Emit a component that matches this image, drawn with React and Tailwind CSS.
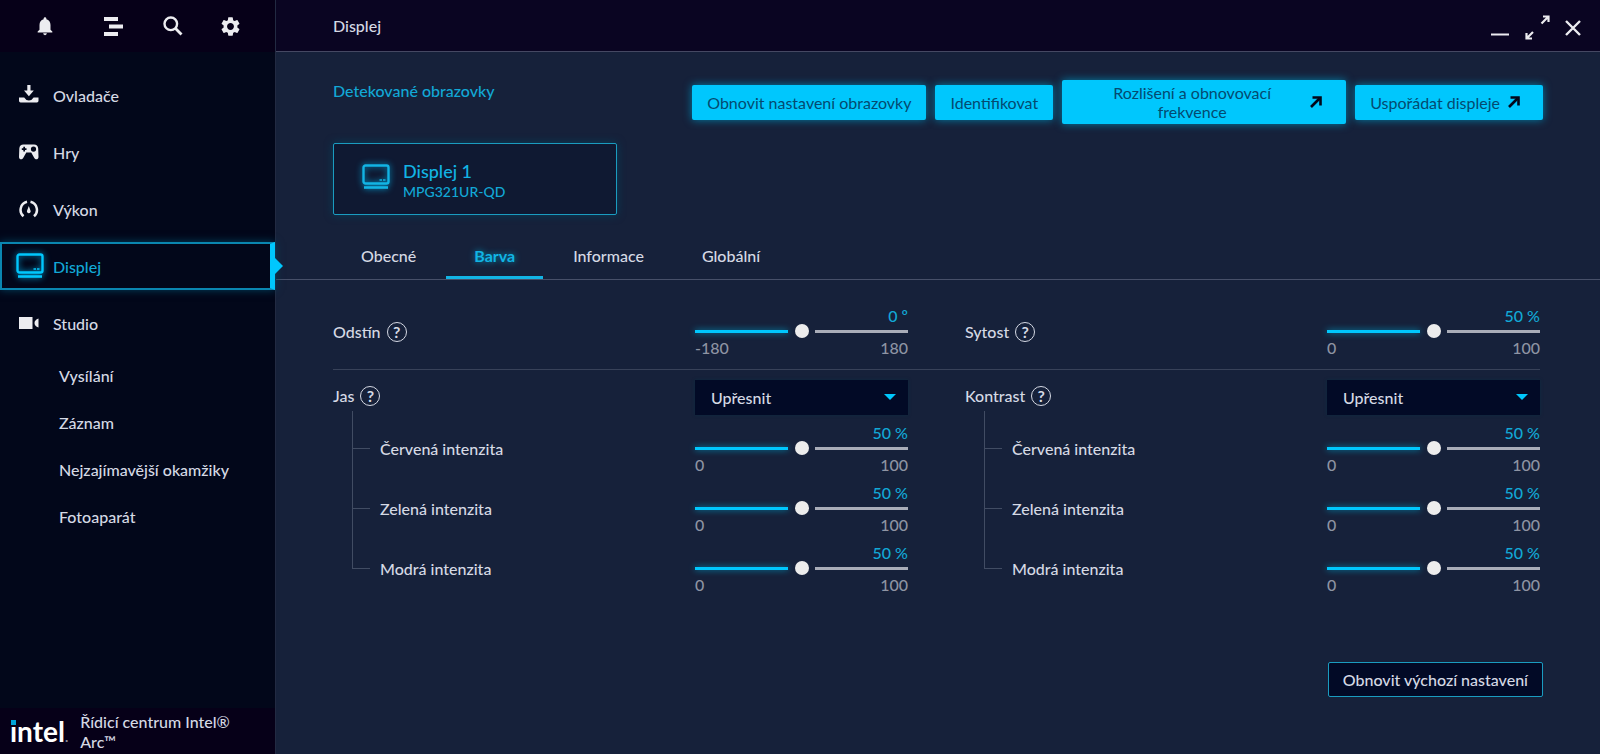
import { useState } from 'react'
import clsx from 'clsx'
import { MdNotifications, MdSettings } from 'react-icons/md'

const DriversIcon = () => (
    <svg width="20" height="19" viewBox="0 0 20 19" fill="currentColor" aria-hidden="true">
        <path d="M8.3 0h3.2v5.5h3.3L9.9 11.2 5 5.5h3.3z" />
        <path d="M0 12.6h5.2a5.3 5.3 0 0 0 9.4 0h4.9v3.2a1.6 1.6 0 0 1-1.6 1.6H1.6A1.6 1.6 0 0 1 0 15.8z" />
    </svg>
)

const GamesIcon = () => (
    <svg width="20" height="16" viewBox="0 0 20 16" fill="currentColor" aria-hidden="true">
        <path
            fillRule="evenodd"
            d="M4.500 .5h10.500c2.500 0 4 1.500 4.200 4L19.500 13c0 2.500-3 3.200-4.200 1L12.200 8.500H7.300L4.200 14C3 16.200 0 15.500 0 13L.3 4.500C.5 2 2 .5 4.500 .5zM4.300 2.800v1.500H2.800v1.700h1.500v1.500H6V6h1.500V4.300H6V2.800zM14.500 2.500a2.600 2.600 0 1 0 0 5.200 2.600 2.600 0 0 0 0-5.200z"
        />
    </svg>
)

const PerformanceIcon = () => (
    <svg width="20" height="18" viewBox="0 0 20 18" fill="none" aria-hidden="true">
        <path d="M4.500 16.200A8.300 8.300 0 0 1 8 1.800M15 16.200A8.300 8.300 0 0 0 11.500 1.800" stroke="currentColor" strokeWidth="2.500" />
        <path d="M9.800 6l1.700 4.500a1.900 1.900 0 1 1-3.400 0z" fill="currentColor" />
    </svg>
)

const StudioIcon = () => (
    <svg width="20" height="12" viewBox="0 0 20 12" fill="currentColor" aria-hidden="true">
        <path d="M0 0h13.500v12H0zM19.500 1.500v9q-4-1.500-4-4.500t4-4.500z" />
    </svg>
)

const DisplayIcon = () => (
    <svg width="28" height="26" viewBox="0 0 28 26" fill="none" className="drop-shadow-[0_0_3px_#00a3d8]" aria-hidden="true">
        <rect x="1.500" y="1.500" width="25" height="18" rx="2" stroke="currentColor" strokeWidth="2.400" />
        <path d="M17.500 16h2.500M21 16h2.500" stroke="currentColor" strokeWidth="1.600" />
        <path d="M2 23.500h24" stroke="currentColor" strokeWidth="2.600" />
    </svg>
)

const ListIcon = () => (
    <svg width="19" height="19" viewBox="0 0 19 19" fill="currentColor" aria-hidden="true">
        <path d="M0 0h14v4H0zM5 7.500h14v4H5zM0 15h14v4H0z" />
    </svg>
)

const SearchIcon = () => (
    <svg width="20" height="20" viewBox="0 0 20 20" fill="none" stroke="currentColor" aria-hidden="true">
        <circle cx="7.800" cy="7.800" r="6.300" strokeWidth="2.400" />
        <path d="M12.300 12.300l6.200 6.200" strokeWidth="2.800" />
    </svg>
)

const ArrowOutIcon = () => (
    <svg width="12" height="12" viewBox="0 0 12 12" fill="none" stroke="#02071a" aria-hidden="true">
        <path d="M1 11l8.500-8.500" strokeWidth="2.600" />
        <path d="M2.500 1.500h8v8" strokeWidth="2.600" />
    </svg>
)

const navItems = [
    { label: 'Ovladače', icon: DriversIcon },
    { label: 'Hry', icon: GamesIcon },
    { label: 'Výkon', icon: PerformanceIcon },
    { label: 'Displej', icon: DisplayIcon, active: true },
    { label: 'Studio', icon: StudioIcon },
]

const studioItems = ['Vysílání', 'Záznam', 'Nejzajímavější okamžiky', 'Fotoaparát']

const tabs = ['Obecné', 'Barva', 'Informace', 'Globální']

const channels = ['Červená intenzita', 'Zelená intenzita', 'Modrá intenzita']

const Sidebar = () => (
    <aside className="flex w-[276px] shrink-0 flex-col border-r border-[#222a42] bg-[#02071a]">
        <div className="flex h-[52px] items-center gap-10 bg-[#060018] pl-[34px] text-[#ececf0]">
            <button type="button" aria-label="Oznámení" className="mr-2"><MdNotifications size={22} /></button>
            <button type="button" aria-label="Seznam"><ListIcon /></button>
            <button type="button" aria-label="Hledat"><SearchIcon /></button>
            <button type="button" aria-label="Nastavení" className="-ml-1"><MdSettings size={23} /></button>
        </div>

        <nav className="mt-[14px]">
            <ul>
                {navItems.map(({ label, icon: Icon, active }) => (
                    <li key={label} className="flex h-[57px] items-center">
                        <a
                            href="#"
                            className={clsx(
                                'relative flex h-12 w-full items-center',
                                active
                                    ? 'gap-[9px] border-2 border-r-[5px] border-[#0a86b0] border-r-[#00c7fd] pl-[14px] text-[#12a8d6] shadow-[0_0_8px_#00425f]'
                                    : 'gap-[14px] pl-[19px]'
                            )}
                        >
                            <span className={active ? 'text-[#00c7fd]' : 'text-[#ececf0]'}><Icon /></span>
                            <span className="pt-[2px]">{label}</span>
                            {active && (
                                <span className="absolute top-[14px] -right-[13px] border-y-8 border-l-8 border-y-transparent border-l-[#00c7fd]" />
                            )}
                        </a>
                    </li>
                ))}
            </ul>
            <ul className="pt-px pl-[59px]">
                {studioItems.map((label) => (
                    <li key={label}>
                        <a href="#" className="flex h-[47px] items-center">{label}</a>
                    </li>
                ))}
            </ul>
        </nav>

        <div className="mt-auto flex h-[46px] items-center gap-3 bg-[#060018] pl-[10px]">
            <div className="relative font-[Lato] text-[28px] leading-8 font-bold text-white">
                intel<span className="text-sm text-[#8a8a9a]">.</span>
                <span className="absolute top-1 left-0 size-[7px] border border-[#060018] bg-[#00a3d8]" />
            </div>
            <p className="pt-px leading-5">Řídicí centrum Intel®<br />Arc™</p>
        </div>
    </aside>
)

const TitleBar = () => (
    <header className="flex h-[52px] items-center justify-between border-b border-[#454862] bg-[#0a0522] pr-[19px] pl-[57px]">
        <h1>Displej</h1>
        <div className="flex items-center gap-[15px] text-[#ececf0]">
            <button type="button" aria-label="Minimalizovat">
                <svg width="20" height="24" viewBox="0 0 20 24" stroke="currentColor" strokeWidth="2"><path d="M1 20.500h18" /></svg>
            </button>
            <button type="button" aria-label="Maximalizovat" className="pt-1">
                <svg width="25" height="25" viewBox="0 0 25 25" fill="none" stroke="currentColor" strokeWidth="2.200">
                    <path d="M16.500 8.500l6.500-6.500M18 1.500h5.500v5.500M8 17l-6 6M1.500 18v5.500h5.500" />
                </svg>
            </button>
            <button type="button" aria-label="Zavřít" className="pt-1">
                <svg width="16" height="16" viewBox="0 0 16 16" stroke="currentColor" strokeWidth="2.400"><path d="M1 1l14 14M15 1L1 15" /></svg>
            </button>
        </div>
    </header>
)

const ActionButton = ({ className, children }) => (
    <button
        type="button"
        className={clsx('flex items-center rounded-xs bg-[#00c7fd] px-[15px] leading-[19px] font-normal text-[#044a70] shadow-[0_0_8px_#007ea8]', className)}
    >
        {children}
    </button>
)

const Slider = ({ label, min = 0, max = 100, initial = 50, unit = '%' }) => {
    const [value, setValue] = useState(initial)
    const ratio = (value - min) / (max - min)

    return (
        <div className="w-[213px] shrink-0">
            <div className="h-[18px] text-right leading-5 text-[#12a8d6]">{value} {unit}</div>
            <div className="grid h-[14px] items-center">
                <div className="col-start-1 row-start-1 flex justify-between">
                    <span
                        className="h-[3px] bg-[#00c7fd] shadow-[0_0_6px_#0090b8]"
                        style={{ width: `calc((100% - 27px) * ${ratio})` }}
                    />
                    <span
                        className="h-[3px] bg-[#a9adb8]"
                        style={{ width: `calc((100% - 27px) * ${1 - ratio})` }}
                    />
                </div>
                <input
                    type="range"
                    aria-label={label}
                    min={min}
                    max={max}
                    value={value}
                    onChange={(e) => setValue(Number(e.target.value))}
                    className="col-start-1 row-start-1 h-[14px] w-full appearance-none bg-transparent [&::-webkit-slider-thumb]:size-[14px] [&::-webkit-slider-thumb]:appearance-none [&::-webkit-slider-thumb]:rounded-full [&::-webkit-slider-thumb]:bg-[#ececec]"
                />
            </div>
            <div className="flex justify-between leading-5 text-[#8e94a3]">
                <span>{min}</span>
                <span>{max}</span>
            </div>
        </div>
    )
}

const HelpLabel = ({ children }) => (
    <div className="flex items-center gap-[6px]">
        <span>{children}</span>
        <button
            type="button"
            aria-label={`Nápověda: ${children}`}
            className="flex size-5 items-center justify-center rounded-full border border-[#d5d9e4] leading-none font-bold"
        >
            ?
        </button>
    </div>
)

const SliderRow = ({ label, ...slider }) => (
    <div className="flex items-center justify-between">
        <HelpLabel>{label}</HelpLabel>
        <Slider label={label} {...slider} />
    </div>
)

const ChannelGroup = ({ label }) => (
    <section>
        <div className="flex items-start justify-between">
            <div className="pt-1">
                <HelpLabel>{label}</HelpLabel>
            </div>
            <div className="relative w-[213px]">
                <select
                    aria-label={label}
                    defaultValue="advanced"
                    className="h-[35px] w-full appearance-none bg-[#020a26] px-4 shadow-[0_0_3px_#0d2c40]"
                >
                    <option value="advanced">Upřesnit</option>
                </select>
                <span className="pointer-events-none absolute top-[14px] right-3 border-x-[6px] border-t-[6px] border-x-transparent border-t-[#00c7fd]" />
            </div>
        </div>

        <ul className="mt-1 ml-[19px]">
            {channels.map((channel, i) => (
                <li key={channel} className="flex h-[60px] items-center gap-[10px]">
                    {/* tree connector */}
                    <div className="flex w-[18px] flex-col self-stretch">
                        <div className={clsx('border-b border-l border-[#414c63]', i === 0 ? '-mt-2 h-[38px]' : 'h-[30px]')} />
                        {i < channels.length - 1 && <div className="flex-1 border-l border-[#414c63]" />}
                    </div>
                    <span className="flex-1">{channel}</span>
                    <Slider label={`${label} – ${channel}`} />
                </li>
            ))}
        </ul>
    </section>
)

const App = () => {
    const [activeTab, setActiveTab] = useState('Barva')

    return (
        <div className="flex min-h-screen bg-[#16213a] font-[Lato,sans-serif] text-[16px] font-medium text-[#d5d9e4]">
            <Sidebar />

            <main className="min-w-0 flex-1">
                <TitleBar />

                <div className="px-[57px] pt-7">
                    <div className="flex justify-between">
                        <h2 className="leading-[22px] text-[#12a8d6]">Detekované obrazovky</h2>
                        <div className="flex items-center gap-[9px]">
                            <ActionButton className="h-[35px]">Obnovit nastavení obrazovky</ActionButton>
                            <ActionButton className="h-[35px]">Identifikovat</ActionButton>
                            <ActionButton className="h-11 w-[284px] gap-[3px]">
                                <span className="w-[230px] px-6">Rozlišení a obnovovací frekvence</span>
                                <ArrowOutIcon />
                            </ActionButton>
                            <ActionButton className="h-[35px] gap-2">
                                Uspořádat displeje
                                <span className="pr-2"><ArrowOutIcon /></span>
                            </ActionButton>
                        </div>
                    </div>

                    {/* Detected display */}
                    <button
                        type="button"
                        className="mt-[19px] flex h-[72px] w-[284px] items-start gap-[13px] rounded-xs border border-[#1a9cc0] bg-[#0f1932] pt-[17px] pl-7 text-left text-[#12b4e4] shadow-[0_0_8px_#073d58]"
                    >
                        <span className="pt-[3px]"><DisplayIcon /></span>
                        <span className="flex flex-col">
                            <span className="text-lg leading-[21px]">Displej 1</span>
                            <span className="text-sm leading-5 text-[#12a8d6]">MPG321UR-QD</span>
                        </span>
                    </button>
                </div>

                {/* Tabs */}
                <div role="tablist" className="mt-[18px] flex h-[47px] gap-[2px] border-b border-[#475069] px-[57px]">
                    {tabs.map((tab) => (
                        <button
                            key={tab}
                            type="button"
                            role="tab"
                            aria-selected={tab === activeTab}
                            onClick={() => setActiveTab(tab)}
                            className={clsx(
                                'border-y-[3px] border-t-transparent px-7',
                                tab === activeTab
                                    ? 'border-b-[#12b4e4] font-bold text-[#12b4e4] text-shadow-[0_0_6px_#0090b8]'
                                    : 'border-b-transparent'
                            )}
                        >
                            {tab}
                        </button>
                    ))}
                </div>

                <div className="pr-[60px] pl-[57px]">
                    <div className="grid grid-cols-2 gap-x-[57px] border-b border-[#384259] pt-[26px] pb-[11px]">
                        <SliderRow label="Odstín" min={-180} max={180} initial={0} unit="º" />
                        <SliderRow label="Sytost" />
                    </div>
                    <div className="grid grid-cols-2 gap-x-[57px] pt-[10px]">
                        <ChannelGroup label="Jas" />
                        <ChannelGroup label="Kontrast" />
                    </div>
                </div>

                <div className="flex justify-end px-[57px] pt-[63px] pb-14">
                    <button type="button" className="h-[35px] rounded-xs border border-[#1a9cc0] bg-[#020a26] px-[14px]">
                        Obnovit výchozí nastavení
                    </button>
                </div>
            </main>
        </div>
    )
}

export default App
